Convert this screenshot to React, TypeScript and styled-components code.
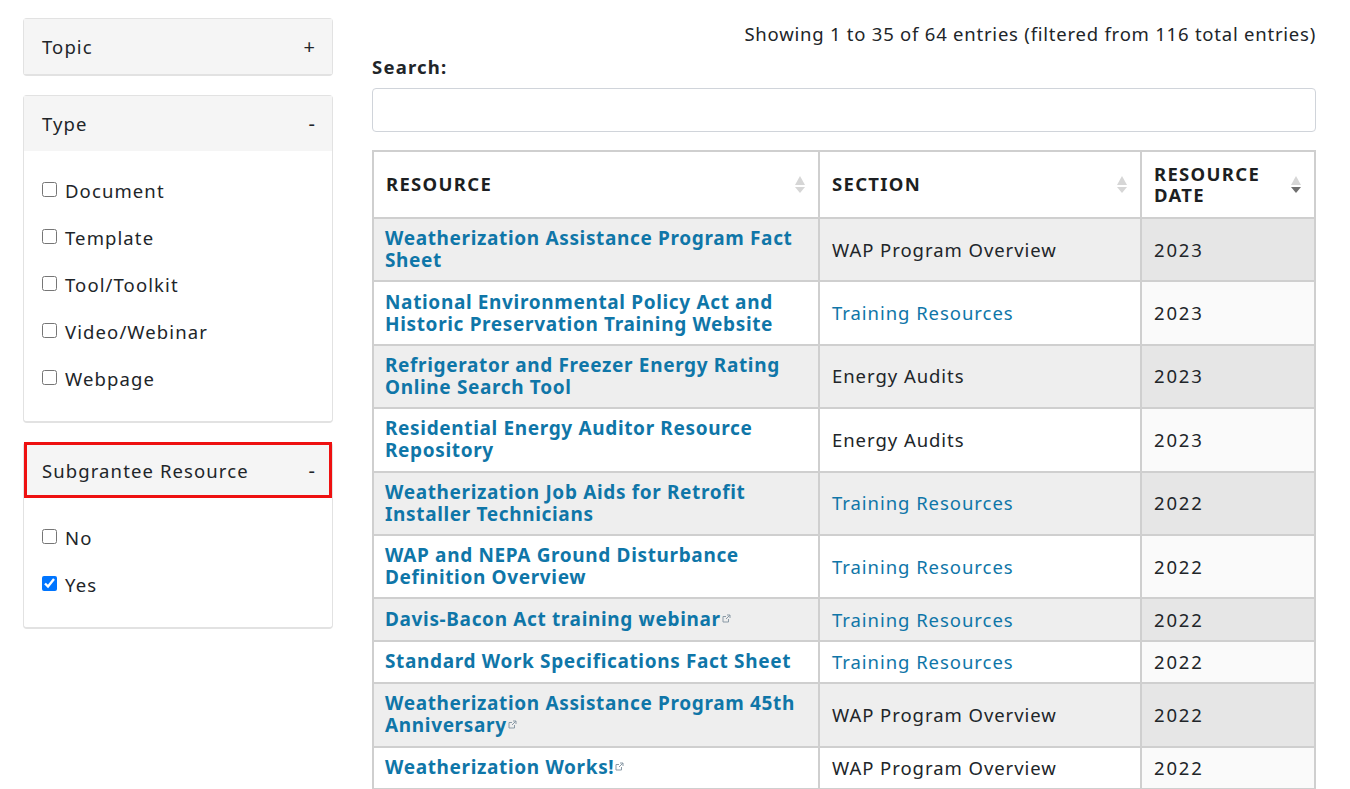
import styled, { createGlobalStyle } from "styled-components";

type Row = {
  title: string;
  external?: boolean;
  section: string;
  sectionLink?: boolean;
  date: string;
  tall?: boolean;
};

const rows: Row[] = [
  { title: "Weatherization Assistance Program Fact Sheet", section: "WAP Program Overview", date: "2023", tall: true },
  { title: "National Environmental Policy Act and Historic Preservation Training Website", section: "Training Resources", sectionLink: true, date: "2023", tall: true },
  { title: "Refrigerator and Freezer Energy Rating Online Search Tool", section: "Energy Audits", date: "2023", tall: true },
  { title: "Residential Energy Auditor Resource Repository", section: "Energy Audits", date: "2023", tall: true },
  { title: "Weatherization Job Aids for Retrofit Installer Technicians", section: "Training Resources", sectionLink: true, date: "2022", tall: true },
  { title: "WAP and NEPA Ground Disturbance Definition Overview", section: "Training Resources", sectionLink: true, date: "2022", tall: true },
  { title: "Davis-Bacon Act training webinar", external: true, section: "Training Resources", sectionLink: true, date: "2022" },
  { title: "Standard Work Specifications Fact Sheet", section: "Training Resources", sectionLink: true, date: "2022" },
  { title: "Weatherization Assistance Program 45th Anniversary", external: true, section: "WAP Program Overview", date: "2022", tall: true },
  { title: "Weatherization Works!", external: true, section: "WAP Program Overview", date: "2022" },
];

const GlobalStyle = createGlobalStyle`
  html, body {
    margin: 0;
    height: 789px;
    overflow: hidden;
    background: #fff;
  }
  body {
    font-family: "Noto Sans", "Liberation Sans", sans-serif;
    font-size: 19px;
    color: #212529;
  }
`;

const Page = styled.div`
  display: flex;
  align-items: flex-start;
  gap: 39px;
  padding: 18px 34px 0 23px;
`;

const Sidebar = styled.aside`
  width: 310px;
  flex-shrink: 0;
  display: flex;
  flex-direction: column;
  gap: 19px;
`;

const Panel = styled.section`
  border: 1px solid #e2e2e2;
  border-bottom-width: 2px;
  border-radius: 4px;
  background: #fff;
`;

const PanelHeader = styled.div<{ $flagged?: boolean }>`
  display: flex;
  align-items: center;
  justify-content: space-between;
  height: ${(p) => (p.$flagged ? "50px" : "55px")};
  padding: ${(p) => (p.$flagged ? "0 14px 0 15px" : "0 17px 0 18px")};
  background: #f5f5f5;
  border: ${(p) => (p.$flagged ? "3px solid #ee1111" : "0")};
  margin-top: ${(p) => (p.$flagged ? "-1px" : "0")};
  font-size: 18.5px;
  letter-spacing: 1.1px;
`;

const Toggle = styled.span`
  font-size: 20px;
  letter-spacing: 0;
`;

const PanelBody = styled.div`
  display: flex;
  flex-direction: column;
  gap: 21px;
  padding: 26px 18px 30px;
`;

const Option = styled.label`
  display: flex;
  align-items: center;
  gap: 8px;
  height: 26px;
  font-size: 18.5px;
  letter-spacing: 1.1px;
`;

const Check = styled.input`
  width: 15px;
  height: 15px;
  margin: -1px 0 0;
  flex-shrink: 0;
`;

const Main = styled.main`
  flex: 1;
  min-width: 0;
`;

const Info = styled.div`
  text-align: right;
  font-size: 18.5px;
  letter-spacing: 0.77px;
  line-height: 32px;
`;

const SearchLabel = styled.label`
  display: block;
  font-weight: 700;
  font-size: 18.5px;
  letter-spacing: 1.2px;
  line-height: 32px;
  margin-top: 1px;
  margin-bottom: 5px;
`;

const SearchInput = styled.input`
  display: block;
  box-sizing: border-box;
  width: 100%;
  height: 44px;
  border: 1px solid #d0d4da;
  border-radius: 4px;
  background: #fff;
`;

const Table = styled.table`
  width: 942px;
  margin-top: 18px;
  table-layout: fixed;
  border-collapse: collapse;
  border: 2px solid #cfcfcf;
`;

const HeadCell = styled.th<{ $width: number }>`
  position: relative;
  box-sizing: border-box;
  width: ${(p) => p.$width}px;
  height: 67px;
  padding: 0 40px 2px 12px;
  border: 2px solid #cfcfcf;
  text-align: left;
  font-size: 18.5px;
  font-weight: 700;
  letter-spacing: 1.3px;
  line-height: 21px;
  text-transform: uppercase;
  color: #1d1f22;
`;

const Arrows = styled.svg`
  position: absolute;
  right: 12px;
  top: 50%;
  margin-top: -10px;
`;

const BodyRow = styled.tr<{ $tall?: boolean }>`
  height: ${(p) => (p.$tall ? "63.4px" : "42.4px")};
  background: #fff;
  &:nth-child(odd) {
    background: #eeeeee;
  }
`;

const Cell = styled.td`
  padding: 0 12px 1px;
  border: 2px solid #cfcfcf;
  font-size: 18.5px;
  letter-spacing: 0.95px;
  line-height: 21px;
`;

const TitleCell = styled(Cell)`
  padding-left: 11px;
`;

const SortedCell = styled(Cell)`
  background: #fafafa;
  letter-spacing: 1.8px;
  tr:nth-child(odd) > & {
    background: #e6e6e6;
  }
`;

const TitleLink = styled.a`
  color: #0f76a8;
  font-size: 19px;
  font-weight: 700;
  letter-spacing: 0.65px;
  text-decoration: none;
`;

const SectionLink = styled.a`
  color: #0f76a8;
  text-decoration: none;
`;

const ExternalIcon = styled.svg`
  display: inline-block;
  margin-left: 1px;
  vertical-align: 3px;
`;

function External() {
  return (
    <ExternalIcon width="9" height="9" viewBox="0 0 9 9" fill="none" stroke="#8a9aa6" strokeWidth="1">
      <path d="M6.5 5v3H1V2.5h3" />
      <path d="M5 1h3v3M8 1 4 5" />
    </ExternalIcon>
  );
}

function SortArrows({ active }: { active?: boolean }) {
  return (
    <Arrows width="12" height="20" viewBox="0 0 12 20">
      <path d="M6 1 11 10H1Z" fill="#d6d6d6" />
      <path d="M1 12H11L6 18Z" fill={active ? "#6f6f6f" : "#d6d6d6"} />
    </Arrows>
  );
}

function FilterOptions({ options }: { options: { label: string; checked?: boolean }[] }) {
  return (
    <PanelBody>
      {options.map((o) => (
        <Option key={o.label}>
          <Check type="checkbox" defaultChecked={o.checked} />
          {o.label}
        </Option>
      ))}
    </PanelBody>
  );
}

function App() {
  return (
    <>
      <GlobalStyle />
      <Page>
        <Sidebar>
          <Panel>
            <PanelHeader>
              Topic
              <Toggle>+</Toggle>
            </PanelHeader>
          </Panel>
          <Panel>
            <PanelHeader>
              Type
              <Toggle>-</Toggle>
            </PanelHeader>
            <FilterOptions
              options={[
                { label: "Document" },
                { label: "Template" },
                { label: "Tool/Toolkit" },
                { label: "Video/Webinar" },
                { label: "Webpage" },
              ]}
            />
          </Panel>
          <Panel>
            <PanelHeader $flagged>
              Subgrantee Resource
              <Toggle>-</Toggle>
            </PanelHeader>
            <FilterOptions options={[{ label: "No" }, { label: "Yes", checked: true }]} />
          </Panel>
        </Sidebar>
        <Main>
          <Info>Showing 1 to 35 of 64 entries (filtered from 116 total entries)</Info>
          <SearchLabel>Search:</SearchLabel>
          <SearchInput type="search" />
          <Table>
            <thead>
              <tr>
                <HeadCell $width={446}>
                  Resource
                  <SortArrows />
                </HeadCell>
                <HeadCell $width={322}>
                  Section
                  <SortArrows />
                </HeadCell>
                <HeadCell $width={174}>
                  Resource Date
                  <SortArrows active />
                </HeadCell>
              </tr>
            </thead>
            <tbody>
              {rows.map((r) => (
                <BodyRow key={r.title} $tall={r.tall}>
                  <TitleCell>
                    <TitleLink href="#">{r.title}</TitleLink>
                    {r.external && <External />}
                  </TitleCell>
                  <Cell>{r.sectionLink ? <SectionLink href="#">{r.section}</SectionLink> : r.section}</Cell>
                  <SortedCell>{r.date}</SortedCell>
                </BodyRow>
              ))}
            </tbody>
          </Table>
        </Main>
      </Page>
    </>
  );
}

export default App;
